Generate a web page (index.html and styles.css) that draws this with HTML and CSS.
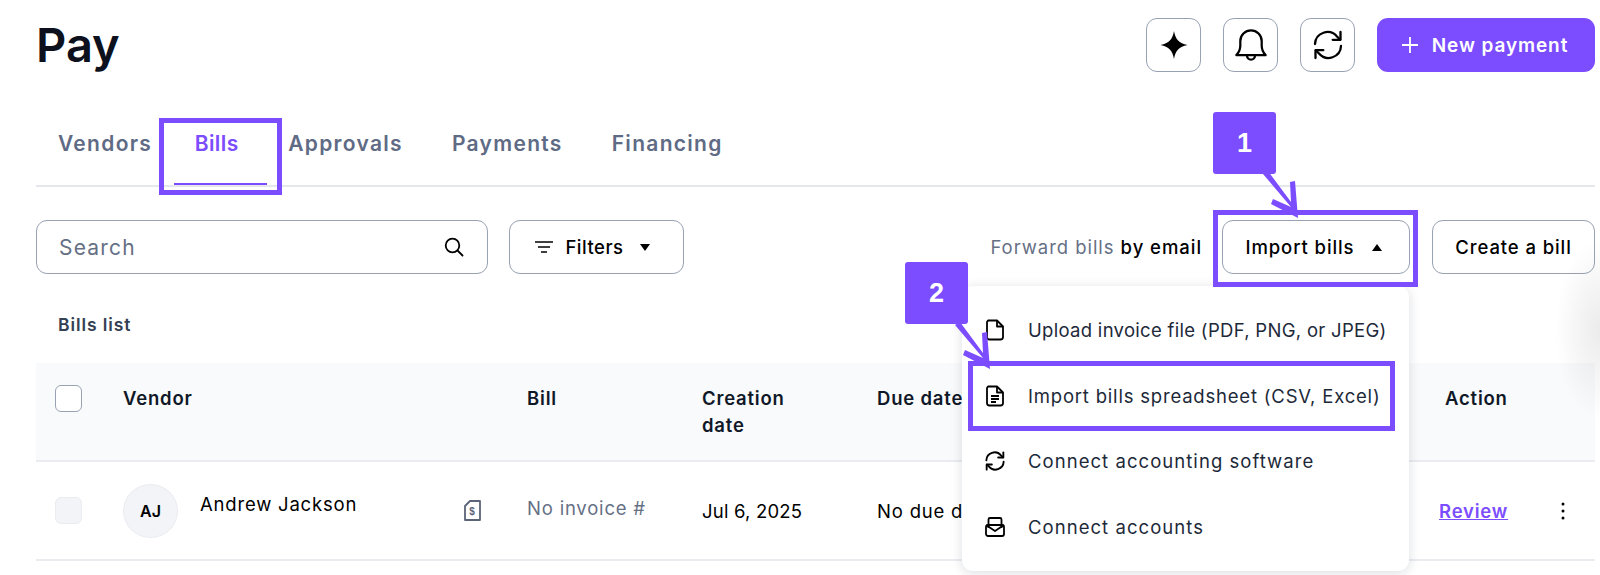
FILE: index.html
```html
<!DOCTYPE html>
<html lang="en">
<head>
  <meta charset="UTF-8" />
  <meta name="viewport" content="width=device-width, initial-scale=1.0"/>
  <title>Pay - Bills</title>
  <link rel="stylesheet" href="styles.css">
</head>
<body>
  <div class="page">
    <header class="top-bar">
      <h1>Pay</h1>
      <div class="top-actions">
        <button class="icon-button">
          <svg width="30" height="30" viewBox="0 0 30 30"><path d="M15 1c1.500 8.500 5 12 13.500 14-8.500 2-12 5.500-13.500 14-1.500-8.500-5-12-13.500-14 8.500-2 12-5.500 13.500-14z" fill="#000"/></svg>
        </button>
        <button class="icon-button">
          <svg width="36" height="36" viewBox="0 0 32 32" fill="none" stroke="#000" stroke-width="2" stroke-linejoin="round"><path d="M3 25c2.500-2.500 3.500-4.500 3.500-8.500v-4a9.500 9.500 0 0 1 19 0v4c0 4 1 6 3.500 8.500z"/><path d="M12.500 25.500a3.500 3.500 0 0 0 7 0"/></svg>
        </button>
        <button class="icon-button">
          <svg width="30" height="30" viewBox="0 0 30 30" fill="none" stroke="#000" stroke-width="2.300" stroke-linecap="round" stroke-linejoin="round"><path d="M2 14A12.500 12.500 0 0 1 24 6.500l3 3"/><path d="M27.500 2v7.800h-7.800"/><path d="M28 16A12.500 12.500 0 0 1 6 23.500l-3-3"/><path d="M2.500 28v-7.800h7.800"/></svg>
        </button>
        <button class="new-payment">
          <svg width="18" height="18" viewBox="0 0 18 18" stroke="#fff" stroke-width="1.800"><path d="M9 1v16M1 9h16"/></svg>
          New payment
        </button>
      </div>
    </header>

    <nav class="tabs">
      <a class="tab">Vendors</a>
      <a class="tab active">Bills</a>
      <a class="tab">Approvals</a>
      <a class="tab">Payments</a>
      <a class="tab">Financing</a>
    </nav>

    <div class="toolbar">
      <div class="search">
        <span>Search</span>
        <svg width="20" height="20" viewBox="0 0 20 20" fill="none" stroke="#000" stroke-width="1.800" stroke-linecap="round"><circle cx="8.500" cy="8.500" r="6.800"/><path d="M13.500 13.500l5 5"/></svg>
      </div>
      <button class="outline-button filters">
        <svg width="18" height="14" viewBox="0 0 18 14" stroke="#000" stroke-width="1.700"><path d="M0 2h18M3 7h12M6 12h6"/></svg>
        Filters
        <svg class="filters-caret" width="10" height="7" viewBox="0 0 10 7"><path d="M0 0h10L5 7z" fill="#000"/></svg>
      </button>
      <div class="toolbar-right">
        <span class="forward">Forward bills <b>by email</b></span>
        <button class="outline-button import">
          Import bills
          <svg width="10" height="7" viewBox="0 0 10 7"><path d="M0 7h10L5 0z" fill="#000"/></svg>
        </button>
        <button class="outline-button create">Create a bill</button>
      </div>
    </div>

    <div class="list-title">Bills list</div>

    <div class="table">
      <div class="table-row table-head">
        <div><span class="checkbox"></span></div>
        <div>Vendor</div>
        <div>Bill</div>
        <div>Creation<br>date</div>
        <div>Due date</div>
        <div class="action-head">Action</div>
      </div>
      <div class="table-row">
        <div><span class="checkbox disabled"></span></div>
        <div class="vendor-cell">
          <span class="avatar">AJ</span>
          <span class="vendor-name">Andrew Jackson</span>
          <svg class="receipt" width="17" height="21" viewBox="0 0 17 21" fill="none" stroke="#5b6478" stroke-width="1.800"><path d="M6 1h10v19H1V6z" stroke-linejoin="round"/><text x="8.500" y="15" font-size="10" font-weight="700" font-family="Liberation Sans" text-anchor="middle" fill="#5b6478" stroke="none">$</text></svg>
        </div>
        <div class="muted">No invoice #</div>
        <div class="date-cell">Jul 6, 2025</div>
        <div>No due date</div>
        <div class="action-cell">
          <a class="review">Review</a>
          <svg width="4" height="18" viewBox="0 0 4 18" fill="#000"><circle cx="2" cy="2" r="1.500"/><circle cx="2" cy="9" r="1.500"/><circle cx="2" cy="16" r="1.500"/></svg>
        </div>
      </div>
    </div>
  </div>

  <div class="edge-shadow"></div>

  <div class="dropdown">
    <div class="dropdown-item upload">
      <svg width="20" height="22" viewBox="0 0 20 22" fill="none" stroke="#000" stroke-width="1.800" stroke-linejoin="round"><path d="M3 1.500h9l6 6V18a2.500 2.500 0 0 1-2.500 2.500h-11A2.500 2.500 0 0 1 2 18V3z"/><path d="M12 1.500v6h6"/></svg>
      <span>Upload invoice file (PDF, PNG, or JPEG)</span>
    </div>
    <div class="dropdown-item sheet">
      <svg width="20" height="22" viewBox="0 0 20 22" fill="none" stroke="#000" stroke-width="1.800" stroke-linejoin="round"><path d="M3 1.500h9l6 6V18a2.500 2.500 0 0 1-2.500 2.500h-11A2.500 2.500 0 0 1 2 18V3z"/><path d="M12 1.500v6h6M6 11h8M6 14h8M6 17h5"/></svg>
      <span>Import bills spreadsheet (CSV, Excel)</span>
    </div>
    <div class="dropdown-item">
      <svg width="20" height="20" viewBox="0 0 30 30" fill="none" stroke="#000" stroke-width="2.800" stroke-linecap="round" stroke-linejoin="round"><path d="M2 14A12.500 12.500 0 0 1 24 6.500l3 3"/><path d="M27.500 2v7.800h-7.800"/><path d="M28 16A12.500 12.500 0 0 1 6 23.500l-3-3"/><path d="M2.500 28v-7.800h7.800"/></svg>
      <span>Connect accounting software</span>
    </div>
    <div class="dropdown-item">
      <svg width="20" height="20" viewBox="0 0 20 20" fill="none" stroke="#000" stroke-width="1.800" stroke-linejoin="round"><rect x="1" y="8" width="18" height="11" rx="2"/><path d="M3.500 11V2.500a1.500 1.500 0 0 1 1.500-1.500h10a1.500 1.500 0 0 1 1.500 1.500V11"/><path d="M1 8l9 6 9-6"/></svg>
      <span>Connect accounts</span>
    </div>
  </div>

  <div class="highlight hl-bills"></div>
  <div class="highlight hl-import"></div>
  <div class="highlight hl-sheet"></div>

  <div class="step step-one">1</div>
  <div class="step step-two">2</div>

  <svg class="arrow arrow-one" width="44" height="46" viewBox="0 0 44 46"><path d="M1 2l5-3 23 31-1-20 5-1 3 37-27-14 2-5 18 8z" fill="#7c4dff"/></svg>
  <svg class="arrow arrow-two" width="44" height="46" viewBox="0 0 44 46"><path d="M1 2l5-3 23 31-1-20 5-1 3 37-27-14 2-5 18 8z" fill="#7c4dff"/></svg>
</body>
</html>
```

FILE: styles.css
```css
* {
  box-sizing: border-box;
}
html, body {
  height: 100%;
}
body {
  font-family: 'Inter', 'Noto Sans', sans-serif;
  margin: 0;
  background-color: #fff;
  color: #000;
  overflow: hidden;
  position: relative;
}
button {
  font-family: inherit;
  background: #fff;
  cursor: pointer;
}
.page {
  padding: 18px 5px 0 36px;
}

/* top bar */
.top-bar {
  display: flex;
  justify-content: space-between;
  align-items: center;
  height: 54px;
}
h1 {
  margin: 0;
  font-size: 47px;
  font-weight: 600;
  line-height: 54px;
  color: #0c111d;
}
.top-actions {
  display: flex;
  gap: 22px;
}
.icon-button {
  width: 55px;
  height: 54px;
  padding: 0;
  display: flex;
  align-items: center;
  justify-content: center;
  border: 1px solid #98a2b3;
  border-radius: 11px;
}
.new-payment {
  width: 218px;
  height: 54px;
  padding: 0 3px 0 0;
  display: flex;
  align-items: center;
  justify-content: center;
  gap: 13px;
  color: #fff;
  background-color: #7c4dff;
  border: none;
  border-radius: 11px;
  font-size: 19px;
  font-weight: 600;
  letter-spacing: 0.9px;
}

/* tabs */
.tabs {
  display: flex;
  height: 69px;
  margin-top: 46px;
  border-bottom: 2px solid #e4e7ec;
  padding-top: 12px;
}
.tab {
  height: 55px;
  padding: 0 24.500px;
  line-height: 28px;
  font-size: 21px;
  font-weight: 600;
  letter-spacing: 1.300px;
  color: #5f6b85;
}
.tab:first-child {
  margin-left: -2.500px;
}
.tab.active {
  width: 93px;
  margin-left: -3px;
  margin-right: -3px;
  padding: 0 0 0 21px;
  letter-spacing: 0.400px;
  color: #7c4dff;
  border-bottom: 2px solid #7c4dff;
}

/* toolbar */
.toolbar {
  display: flex;
  align-items: center;
  height: 54px;
  margin-top: 33px;
}
.search {
  width: 452px;
  height: 54px;
  padding: 0 23px 0 22px;
  display: flex;
  align-items: center;
  justify-content: space-between;
  border: 1px solid #98a2b3;
  border-radius: 11px;
  font-size: 21px;
  letter-spacing: 1.200px;
  color: #667085;
}
.outline-button {
  height: 54px;
  display: flex;
  align-items: center;
  justify-content: center;
  border: 1px solid #98a2b3;
  border-radius: 11px;
  font-size: 18.500px;
  font-weight: 500;
  letter-spacing: 0.900px;
  color: #000;
}
.filters {
  width: 175px;
  margin-left: 21px;
  gap: 12px;
  letter-spacing: 0.500px;
  padding-right: 14px;
}
.filters-caret {
  margin-left: 4px;
}
.toolbar-right {
  margin-left: auto;
  display: flex;
  align-items: center;
}
.forward {
  font-size: 18.500px;
  letter-spacing: 0.950px;
  color: #667085;
  margin-right: 20px;
}
.forward b {
  font-weight: 500;
  color: #000;
}
.import {
  width: 188px;
  gap: 18px;
  padding-right: 10px;
}
.create {
  width: 163px;
  margin-left: 22px;
}

/* table */
.list-title {
  margin: 40px 0 0 22px;
  font-size: 17.500px;
  font-weight: 600;
  letter-spacing: 0.900px;
  line-height: 22px;
  color: #344054;
}
.table {
  margin-top: 27px;
}
.table-row {
  display: grid;
  grid-template-columns: 87px 404px 175px 175px 1fr 156px;
  align-items: center;
  height: 99px;
  border-bottom: 2px solid #eaecf0;
  font-size: 18.500px;
  letter-spacing: 0.800px;
}
.table-row > div:first-child {
  padding-left: 19px;
}
.table-head {
  background-color: #f9fafb;
  align-items: start;
  padding-top: 22px;
  line-height: 27px;
  font-weight: 600;
  color: #101828;
}
.action-head {
  padding-left: 6px;
}
.checkbox {
  display: block;
  width: 27px;
  height: 27px;
  background-color: #fff;
  border: 1px solid #98a2b3;
  border-radius: 6px;
}
.checkbox.disabled {
  background-color: #f2f4f7;
  border-color: #eaecf0;
}
.vendor-cell {
  display: flex;
  align-items: center;
}
.avatar {
  width: 55px;
  height: 54px;
  display: flex;
  align-items: center;
  justify-content: center;
  border-radius: 50%;
  background-color: #f2f4f7;
  border: 1px solid #eaecf0;
  font-size: 16px;
  font-weight: 600;
  letter-spacing: 0;
}
.vendor-name {
  margin: -14px 0 0 22px;
}
.receipt {
  margin-left: auto;
  margin-right: 46px;
}
.muted {
  margin-top: -6px;
  color: #667085;
}
.date-cell {
  letter-spacing: 0.200px;
}
.action-cell {
  display: flex;
  align-items: center;
  gap: 53px;
}
.review {
  color: #7c4dff;
  font-weight: 600;
  text-decoration: underline;
}

/* dropdown menu */
.dropdown {
  position: absolute;
  left: 962px;
  top: 286px;
  width: 447px;
  height: 285px;
  padding: 11px 0;
  display: grid;
  grid-auto-rows: 1fr;
  background-color: #fff;
  border-radius: 11px;
  box-shadow: 0 2px 12px rgba(16, 24, 40, 0.14);
}
.dropdown-item {
  display: flex;
  align-items: center;
  gap: 23px;
  padding-left: 23px;
  font-size: 18.500px;
  letter-spacing: 1.050px;
  color: #1d2939;
}
.dropdown-item.upload {
  letter-spacing: 0.300px;
}
.dropdown-item.sheet {
  letter-spacing: 0.800px;
}
.edge-shadow {
  position: absolute;
  left: 1520px;
  top: 240px;
  width: 80px;
  height: 180px;
  background: radial-gradient(ellipse 45px 90px at 100% 50%, rgba(0, 0, 0, 0.08), rgba(0, 0, 0, 0));
}

/* tutorial annotations */
.highlight {
  position: absolute;
  border: 5px solid #7c4dff;
}
.hl-bills {
  left: 159px;
  top: 118px;
  width: 123px;
  height: 77px;
}
.hl-import {
  left: 1213px;
  top: 210px;
  width: 205px;
  height: 77px;
}
.hl-sheet {
  left: 968px;
  top: 361px;
  width: 427px;
  height: 70px;
}
.step {
  position: absolute;
  width: 63px;
  height: 62px;
  display: flex;
  align-items: center;
  justify-content: center;
  background-color: #7c4dff;
  border-radius: 3px;
  color: #fff;
  font-family: 'Liberation Sans', sans-serif;
  font-size: 27px;
  font-weight: 700;
}
.step-one {
  left: 1213px;
  top: 112px;
}
.step-two {
  left: 905px;
  top: 262px;
}
.arrow {
  position: absolute;
}
.arrow-one {
  left: 1262px;
  top: 172px;
}
.arrow-two {
  left: 954px;
  top: 323px;
}
```
